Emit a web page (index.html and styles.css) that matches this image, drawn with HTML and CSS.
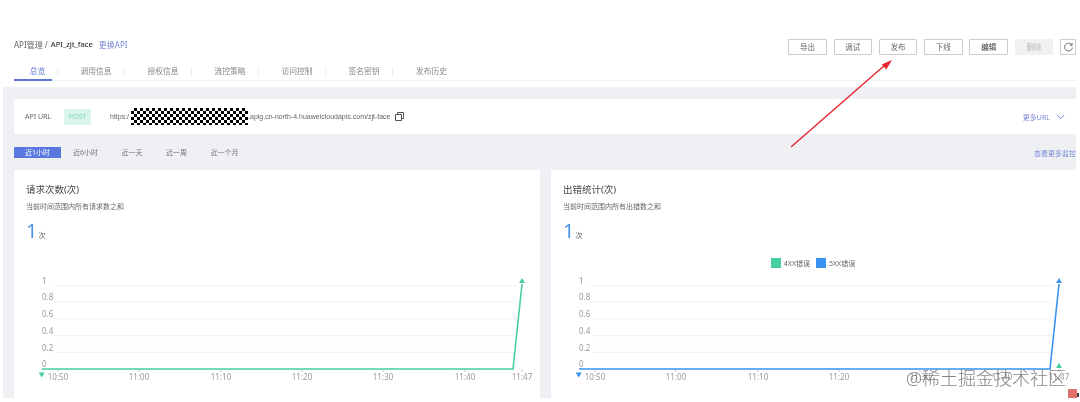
FILE: index.html
```html
<!DOCTYPE html>
<html lang="zh-CN">
<head>
  <meta charset="UTF-8" />
  <meta name="viewport" content="width=device-width, initial-scale=1.0" />
  <title>API_zjt_face</title>
  <link rel="stylesheet" href="styles.css">
</head>
<body>
  <header class="top-bar">
    <div class="breadcrumb">
      <span>API管理 /</span>
      <span class="api-name">API_zjt_face</span>
      <a class="link swap-link">更换API</a>
    </div>
    <div class="actions">
      <button class="btn">导出</button>
      <button class="btn">调试</button>
      <button class="btn">发布</button>
      <button class="btn">下线</button>
      <button class="btn btn-dark">编辑</button>
      <button class="btn btn-disabled">删除</button>
      <button class="btn btn-icon">
        <svg viewBox="0 0 12 12" width="11" height="11">
          <path d="M9.6 3.2A4.3 4.3 0 1 0 10.3 6" />
          <path d="M9.9 1v2.6H7.3" />
        </svg>
      </button>
    </div>
  </header>

  <nav class="tabs">
    <a class="tab active">总览</a>
    <a class="tab">调用信息</a>
    <a class="tab">授权信息</a>
    <a class="tab">流控策略</a>
    <a class="tab">访问控制</a>
    <a class="tab">签名密钥</a>
    <a class="tab tab-last">发布历史</a>
  </nav>

  <main class="overview">
    <section class="url-card">
      <span class="url-label">API URL</span>
      <span class="method">POST</span>
      <span class="url-text">https:/<span class="mask"></span>.apig.cn-north-4.huaweicloudapis.com/zjt-face</span>
      <svg class="copy-icon" viewBox="0 0 9 9" width="9" height="9">
        <path d="M2.5 2V.5h6v6H7" />
        <path d="M.5 2.500h6v6h-6z" />
      </svg>
      <a class="link more-url">更多URL</a>
      <svg class="chevron" viewBox="0 0 9 6" width="9" height="6">
        <path d="M.8 1l3.700 3.700L8.200 1" />
      </svg>
    </section>

    <div class="range-row">
      <div class="ranges">
        <a class="range active">近1小时</a>
        <a class="range">近6小时</a>
        <a class="range">近一天</a>
        <a class="range">近一周</a>
        <a class="range">近一个月</a>
      </div>
      <a class="link monitor-link">查看更多监控</a>
    </div>

    <div class="cards">
      <section class="card">
        <div class="card-head">
          <h2>请求次数(次)</h2>
          <p>当前时间范围内所有请求数之和</p>
          <div class="stat"><b>1</b><span>次</span></div>
          <div class="legend"></div>
        </div>
        <svg class="chart" width="526" height="126">
          <g class="grid">
            <path d="M40 13.700H503M40 30H503M40 46.700H503M40 63.700H503M40 80.300H503" />
          </g>
          <g class="ticks">
            <path d="M44 97v3M125 97v3M207 97v3M288 97v3M369 97v3M451 97v3M508 97v3" />
          </g>
          <g class="labels">
            <text x="28" y="11.500">1</text>
            <text x="28" y="28">0.8</text>
            <text x="28" y="45">0.6</text>
            <text x="28" y="62">0.4</text>
            <text x="28" y="78.500">0.2</text>
            <text x="28" y="95">0</text>
          </g>
          <g class="labels centered">
            <text x="44" y="107.500">10:50</text>
            <text x="125" y="107.500">11:00</text>
            <text x="207" y="107.500">11:10</text>
            <text x="288" y="107.500">11:20</text>
            <text x="369" y="107.500">11:30</text>
            <text x="451" y="107.500">11:40</text>
            <text x="508" y="107.500">11:47</text>
          </g>
          <path class="line green" d="M28 97H499L508 12" />
          <path class="fill-green" d="M505 11l3-5 3 5zM24.700 100.500h6l-3 5z" />
        </svg>
      </section>

      <section class="card">
        <div class="card-head">
          <h2>出错统计(次)</h2>
          <p>当前时间范围内所有出错数之和</p>
          <div class="stat"><b>1</b><span>次</span></div>
          <div class="legend">
            <i class="swatch fill-green"></i><span>4XX错误</span>
            <i class="swatch fill-blue"></i><span>5XX错误</span>
          </div>
        </div>
        <svg class="chart" width="525" height="126">
          <g class="grid">
            <path d="M40 13.700H503M40 30H503M40 46.700H503M40 63.700H503M40 80.300H503" />
          </g>
          <g class="ticks">
            <path d="M44 97v3M125 97v3M207 97v3M288 97v3M369 97v3M451 97v3M508 97v3" />
          </g>
          <g class="labels">
            <text x="28" y="11.500">1</text>
            <text x="28" y="28">0.8</text>
            <text x="28" y="45">0.6</text>
            <text x="28" y="62">0.4</text>
            <text x="28" y="78.500">0.2</text>
            <text x="28" y="95">0</text>
          </g>
          <g class="labels centered">
            <text x="44" y="107.500">10:50</text>
            <text x="125" y="107.500">11:00</text>
            <text x="207" y="107.500">11:10</text>
            <text x="288" y="107.500">11:20</text>
            <text x="369" y="107.500">11:30</text>
            <text x="451" y="107.500">11:40</text>
            <text x="508" y="107.500">11:47</text>
          </g>
          <path class="line blue" d="M28 97H499L508 12" />
          <path class="fill-green" d="M505 96l3-5 3 5z" />
          <path class="fill-blue" d="M505 11l3-5 3 5zM24.700 100.500h6l-3 5z" />
        </svg>
      </section>
    </div>
  </main>

  <!-- annotation drawn on top of the screenshot -->
  <svg class="arrow" viewBox="0 0 120 100" width="120" height="100">
    <path class="arrow-line" d="M6 92L100 10" />
    <path class="arrow-head" d="M107 5L101.300 14.600L96.700 9.400z" />
  </svg>
  <div class="watermark">@稀土掘金技术社区</div>
  <div class="corner-mark"></div>
</body>
</html>
```

FILE: styles.css
```css
* {
  box-sizing: border-box;
}

html,
body {
  height: 402px;
}

body {
  margin: 0;
  position: relative;
  overflow: hidden;
  background: #ffffff;
  color: #666;
  font-family: "Noto Sans", "Noto Sans CJK SC", sans-serif;
  font-size: 8px;
  filter: blur(0.45px);
}

a {
  cursor: pointer;
}

.link {
  color: #7a88d8;
}

.top-bar {
  display: flex;
  align-items: flex-start;
  justify-content: space-between;
  padding: 39px 4px 0 14px;
}

.breadcrumb {
  display: flex;
  gap: 3px;
  line-height: 11px;
}

.api-name {
  color: #333;
  font-size: 7.500px;
  font-weight: 500;
}

.swap-link {
  margin-left: 3px;
}

.actions {
  display: flex;
  gap: 6.800px;
}

.btn {
  width: 38.500px;
  height: 16px;
  padding: 0;
  background: #fff;
  border: 1px solid #ccc;
  border-radius: 1px;
  color: #666;
  font-family: inherit;
  font-size: 7.500px;
  line-height: 13px;
}

.btn-dark {
  color: #333;
}

.btn-disabled {
  background: #f1f1f1;
  border-color: #f1f1f1;
  color: #bbb;
}

.btn-icon {
  width: 16px;
  display: flex;
  align-items: center;
  justify-content: center;
}

.btn-icon svg {
  fill: none;
  stroke: #666;
  stroke-width: 1;
}

.tabs {
  display: flex;
  height: 14px;
  margin: 12px 4px 0 14px;
  border-bottom: 1px solid #f1f2f4;
  color: #888;
  font-size: 7.800px;
}

.tab {
  position: relative;
  width: 67px;
  height: 9px;
  padding-left: 10px;
  line-height: 9px;
  text-align: center;
  border-right: 1px solid #eee;
}

.tab.active {
  width: 44px;
  padding-left: 4px;
  color: #5b74d6;
}

.tab.active::after {
  content: "";
  position: absolute;
  left: 0;
  top: 12px;
  width: 38px;
  height: 2px;
  background: #5b74d6;
}

.tab-last {
  border-right: none;
}

.overview {
  height: 311px;
  margin: 6px 4px 0 3px;
  padding: 12px 0 0 11px;
  background: #eef0f3;
}

.url-card {
  display: flex;
  align-items: center;
  height: 35px;
  padding: 0 11px;
  background: #fff;
}

.url-label {
  width: 39px;
  font-size: 7px;
}

.method {
  width: 27px;
  height: 16px;
  margin-right: 19px;
  background: #dcf5ec;
  color: #7fd8b8;
  font-size: 7px;
  line-height: 16px;
  text-align: center;
}

.url-text {
  display: flex;
  align-items: center;
  font-family: "Liberation Sans", sans-serif;
  font-size: 7px;
  white-space: nowrap;
}

.mask {
  width: 117px;
  height: 17px;
  margin-left: 2px;
  background: conic-gradient(#000 25%, #fff 0 50%, #000 0 75%, #fff 0) 0 0 / 6px 6px;
}

.copy-icon {
  margin-left: 5px;
  fill: #fff;
  stroke: #555;
  stroke-width: 1;
}

.more-url {
  margin-left: auto;
  font-size: 7px;
}

.chevron {
  margin-left: 6px;
  fill: none;
  stroke: #7a88d8;
  stroke-width: 1;
}

.range-row {
  display: flex;
  align-items: center;
  justify-content: space-between;
  height: 11px;
  margin-top: 13px;
}

.ranges {
  display: flex;
  gap: 23.500px;
  color: #777;
  font-size: 7px;
}

.range {
  line-height: 11px;
}

.range.active {
  width: 47px;
  margin-right: -11.500px;
  background: #5b78e0;
  color: #fff;
  text-align: center;
}

.monitor-link {
  font-size: 7px;
}

.cards {
  display: grid;
  grid-template-columns: 526px 525px;
  gap: 11px;
  margin-top: 12px;
}

.card {
  height: 228px;
  background: #fff;
}

.card-head {
  padding: 14px 12px 0;
}

.card h2 {
  margin: 0;
  color: #444;
  font-size: 9.500px;
  font-weight: 400;
  line-height: 12px;
}

.card p {
  margin: 6px 0 0;
  font-size: 7px;
  line-height: 10px;
}

.stat {
  display: flex;
  align-items: flex-end;
  gap: 1px;
  height: 18px;
  margin-top: 10px;
}

.stat b {
  color: #4a95e8;
  font-size: 20px;
  font-weight: 400;
  line-height: 18px;
}

.stat span {
  font-size: 7px;
  line-height: 8px;
}

.legend {
  display: flex;
  align-items: center;
  justify-content: center;
  gap: 3px;
  height: 12px;
  margin-top: 17px;
  padding-left: 2px;
  font-size: 7px;
}

.swatch {
  width: 10px;
  height: 10px;
}

.swatch + span {
  margin-right: 3px;
}

.chart {
  display: block;
  margin-top: 3px;
}

.grid path {
  fill: none;
  stroke: #f2f2f2;
  stroke-width: 1;
}

.ticks path {
  fill: none;
  stroke: #ccc;
  stroke-width: 1;
}

.labels text {
  fill: #999;
  font-size: 8px;
}

.labels.centered text {
  text-anchor: middle;
}

.line {
  fill: none;
  stroke-width: 1.600;
}

.green {
  stroke: #48cfa0;
}

.blue {
  stroke: #3a93f0;
}

.fill-green {
  fill: #48cfa0;
  background: #48cfa0;
}

.fill-blue {
  fill: #3a93f0;
  background: #3a93f0;
}

.arrow {
  position: absolute;
  left: 785px;
  top: 55px;
}

.arrow-line {
  fill: none;
  stroke: #e8242c;
  stroke-width: 1.400;
}

.arrow-head {
  fill: #e8242c;
}

.watermark {
  position: absolute;
  left: 906px;
  top: 365px;
  color: rgba(110, 110, 110, 0.85);
  font-size: 18px;
  font-weight: 300;
  line-height: 26px;
  white-space: nowrap;
}

.corner-mark {
  position: absolute;
  left: 1068px;
  top: 389px;
  width: 9px;
  height: 9px;
  background: #e0706c;
}

.corner-mark::after {
  content: "";
  position: absolute;
  left: 9px;
  top: 4px;
  width: 2px;
  height: 4px;
  background: #444;
}
```
